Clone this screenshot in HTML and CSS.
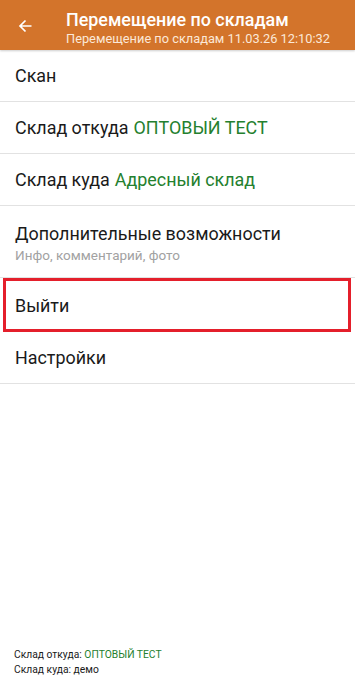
FILE: index.html
```html
<!DOCTYPE html>
<html lang="ru">
<head>
<meta charset="utf-8">
<link rel="stylesheet" href="styles.css">
</head>
<body>
<div class="screen">
  <header class="appbar">
    <svg class="back" width="14" height="14" viewBox="0 0 14 14"><path d="M13.5 7H2M7.5 1.5L2 7l5.5 5.5" fill="none" stroke="#fff" stroke-width="1.7"/></svg>
    <div class="titles">
      <div class="title">Перемещение по складам</div>
      <div class="subtitle">Перемещение по складам 11.03.26 12:10:32</div>
    </div>
  </header>
  <ul class="menu">
    <li class="item">Скан</li>
    <li class="item">Склад откуда <span class="green">ОПТОВЫЙ ТЕСТ</span></li>
    <li class="item">Склад куда <span class="green">Адресный склад</span></li>
    <li class="item tall">Дополнительные возможности<span class="hint">Инфо, комментарий, фото</span></li>
    <li class="item marked">Выйти</li>
    <li class="item">Настройки</li>
  </ul>
  <footer class="status">
    <div>Склад откуда: <span class="green">ОПТОВЫЙ ТЕСТ</span></div>
    <div>Склад куда: демо</div>
  </footer>
</div>
</body>
</html>
```
FILE: styles.css
```css
html, body { margin: 0; padding: 0; }
body { font-family: Roboto, "Noto Sans", sans-serif; background: #fff; color: #1a1a1a; }
.screen { width: 355px; height: 677px; display: flex; flex-direction: column; overflow: hidden; }
.appbar { height: 50px; background: #d3742b; display: flex; align-items: center; box-shadow: 0 1px 2px rgba(0,0,0,0.2); position: relative; z-index: 1; flex-shrink: 0; }
.back { margin-left: 18px; margin-right: 34px; margin-top: 1px; }
.titles { color: #fff; display: flex; flex-direction: column; padding-top: 5px; }
.title { font-size: 17.9px; font-weight: 500; line-height: 22px; }
.subtitle { font-size: 12.8px; line-height: 15px; color: #fbe8d8; margin-top: 0; }
.menu { list-style: none; margin: 0; padding: 0; }
.item { height: 51px; border-bottom: 1.5px solid #e2e2e2; display: flex; align-items: center; padding-left: 15px; font-size: 17.9px; box-sizing: content-box; }
.item .green { margin-left: 5px; }
.tall { height: 72px; flex-direction: column; align-items: flex-start; justify-content: center; padding-top: 2px; box-sizing: border-box; }
.hint { font-size: 13.5px; color: #a2a2a2; margin-top: 3px; }
.green { color: #24802e; }
.marked { height: 48px; border: 3px solid #e41f2b; margin: 0 4px 0 3px; padding-left: 9px; }
.status { margin-top: auto; padding: 0 0 0 14px; font-size: 10.3px; line-height: 15px; color: #1a1a1a; }
```
